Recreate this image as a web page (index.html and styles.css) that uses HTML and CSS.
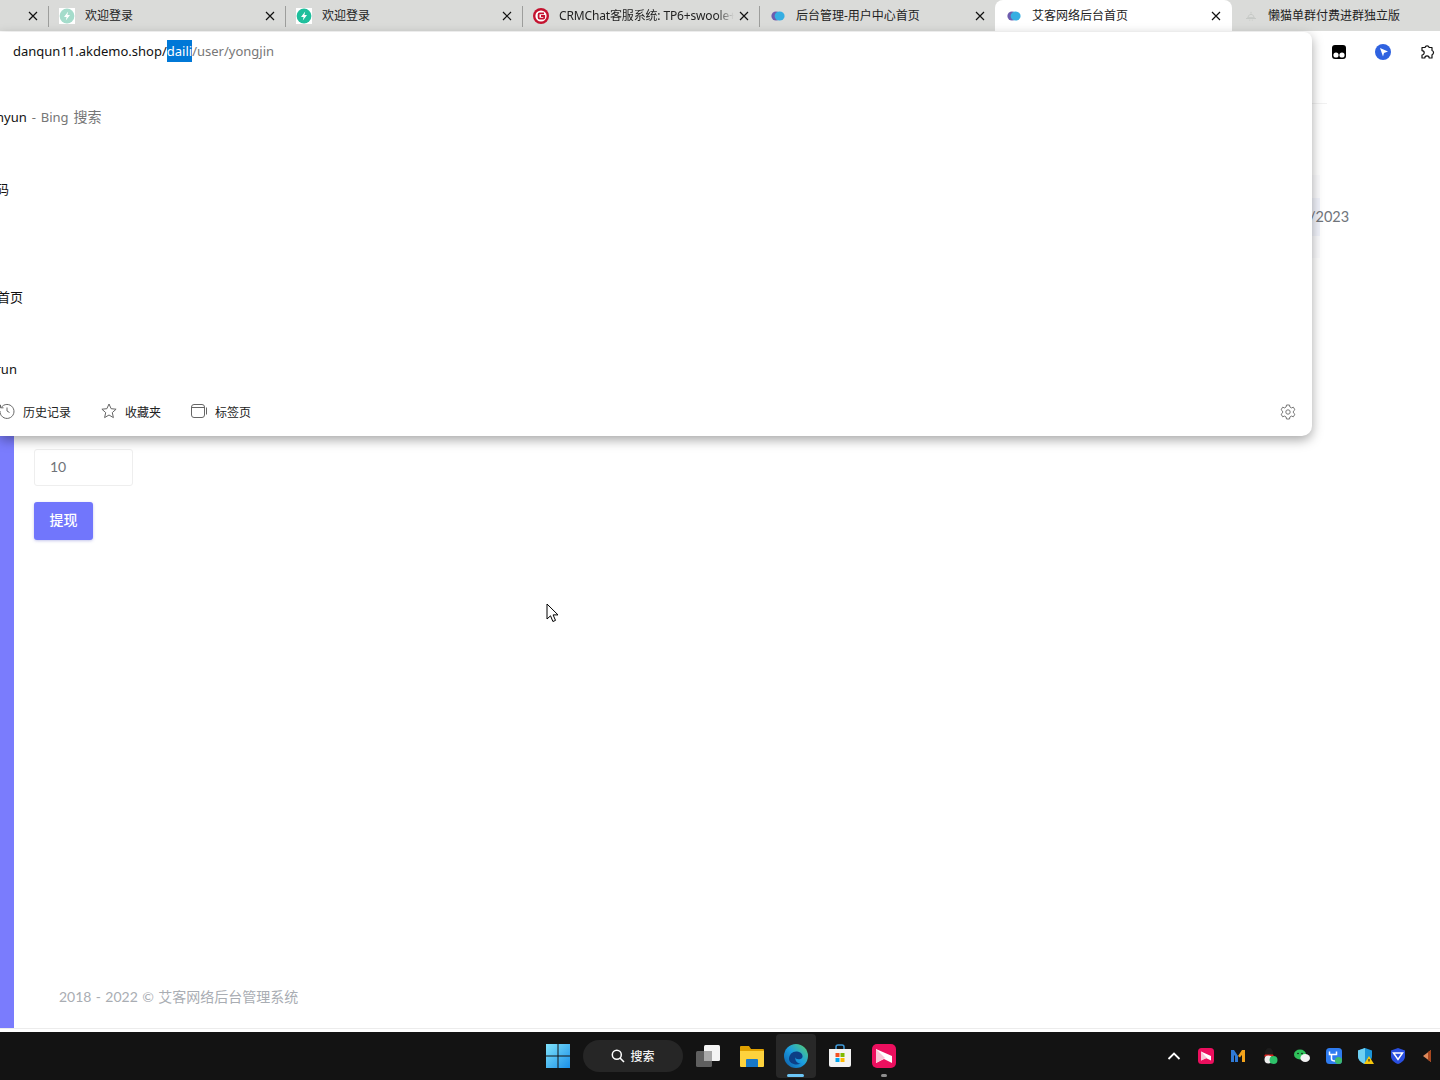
FILE: index.html
```html
<!DOCTYPE html>
<html lang="zh-CN">
<head>
<meta charset="utf-8">
<title>艾客网络后台首页</title>
<link rel="stylesheet" href="styles.css">
</head>
<body>
<div class="tabs">
  <div class="tab tab-first"><svg class="close" viewBox="0 0 10 10"><path d="M1 1l8 8M9 1l-8 8"/></svg></div>
  <div class="tab sep">
    <svg class="fav" viewBox="0 0 16 16"><rect width="16" height="16" fill="#fff"/><circle cx="8" cy="8" r="7.4" fill="#a5dccb"/><path d="M9.2 3.4L5 9h2.6l-.8 3.6L11 7H8.4z" fill="#fff"/></svg>
    <span class="tab-title">欢迎登录</span>
    <svg class="close" viewBox="0 0 10 10"><path d="M1 1l8 8M9 1l-8 8"/></svg>
  </div>
  <div class="tab sep">
    <svg class="fav" viewBox="0 0 16 16"><rect width="16" height="16" fill="#fff"/><circle cx="8" cy="8" r="7.4" fill="#1fbf9c"/><path d="M9.2 3.4L5 9h2.6l-.8 3.6L11 7H8.4z" fill="#fff"/></svg>
    <span class="tab-title">欢迎登录</span>
    <svg class="close" viewBox="0 0 10 10"><path d="M1 1l8 8M9 1l-8 8"/></svg>
  </div>
  <div class="tab sep">
    <svg class="fav" viewBox="0 0 16 16"><circle cx="8" cy="8" r="8" fill="#c4122f"/><circle cx="8" cy="8" r="5.6" fill="#fff"/><path d="M11 5.4H6.6a1 1 0 0 0-1 1v3.2a1 1 0 0 0 1 1h3.6a1 1 0 0 0 1-1V8H8" fill="none" stroke="#c4122f" stroke-width="1.8"/></svg>
    <span class="tab-title tab-fade">CRMChat客服系统: TP6+swoole+</span>
    <svg class="close" viewBox="0 0 10 10"><path d="M1 1l8 8M9 1l-8 8"/></svg>
  </div>
  <div class="tab sep tab-narrow">
    <svg class="fav blob" viewBox="0 0 14 10"><circle cx="5" cy="5" r="4.6" fill="#6d5cae"/><ellipse cx="8.6" cy="5" rx="5" ry="4.6" fill="#35aee2"/></svg>
    <span class="tab-title">后台管理-用户中心首页</span>
    <svg class="close" viewBox="0 0 10 10"><path d="M1 1l8 8M9 1l-8 8"/></svg>
  </div>
  <div class="tab tab-active">
    <svg class="fav blob" viewBox="0 0 14 10"><circle cx="5" cy="5" r="4.6" fill="#6d5cae"/><ellipse cx="8.6" cy="5" rx="5" ry="4.6" fill="#35aee2"/></svg>
    <span class="tab-title">艾客网络后台首页</span>
    <svg class="close" viewBox="0 0 10 10"><path d="M1 1l8 8M9 1l-8 8"/></svg>
  </div>
  <div class="tab tab-last">
    <svg class="fav blob" viewBox="0 0 14 12"><path d="M7 1v2M3 8c1-1 1-4 4-4s3 3 4 4zM1 9h12M5 11h1M8 11h1" fill="none" stroke="#c6c9c6" stroke-width="1.2"/></svg>
    <span class="tab-title">懒猫单群付费进群独立版</span>
  </div>
</div>

<div class="toolbar">
  <svg class="tool" viewBox="0 0 16 16"><rect x="1" y="1" width="14" height="14" rx="3" fill="#000"/><circle cx="5" cy="11" r="2.6" fill="#fff"/><circle cx="11" cy="11" r="2.6" fill="#fff"/></svg>
  <svg class="tool" viewBox="0 0 16 16"><circle cx="8" cy="8" r="8" fill="#2f62e0"/><path d="M5 4l8 3.6L9 9l-1 3.6z" fill="#fff"/></svg>
  <svg class="tool" viewBox="0 0 16 16"><path d="M3 3.500h3a2.200 2.200 0 0 1 4.200 0H13v3a2.200 2.200 0 0 1 0 4.200V14h-2.800a2.200 2.200 0 0 0-4.400 0H3v-3a2.200 2.200 0 0 0 0-4.400z" fill="#fff" stroke="#111" stroke-width="1.200" stroke-linejoin="round"/></svg>
</div>

<div class="page">
  <aside class="sidebar"></aside>
  <main class="content">
    <div class="topbar"></div>
    <div class="date-card"><div class="date-box"><span class="date-text">/2023</span></div></div>
    <div class="amount">10</div>
    <button class="withdraw">提现</button>
    <footer class="copyright">2018 - 2022 © 艾客网络后台管理系统</footer>
  </main>
</div>
<div class="page-end"></div>

<div class="taskbar">
  <div class="slot">
    <svg class="icon24" viewBox="0 0 24 24"><defs><linearGradient id="win" x1="0" y1="0" x2="1" y2="1"><stop offset="0" stop-color="#7fe3fb"/><stop offset="1" stop-color="#1a8fe8"/></linearGradient></defs><path d="M0 0h11.500v11.500H0zM12.500 0H24v11.500H12.500zM0 12.500h11.500V24H0zM12.500 12.500H24V24H12.500z" fill="url(#win)"/></svg>
  </div>
  <div class="search">
    <svg class="search-glass" viewBox="0 0 14 14"><circle cx="5.800" cy="5.800" r="4.500" fill="none" stroke="#fff" stroke-width="1.500"/><path d="M9 9l4 4" stroke="#fff" stroke-width="1.600"/></svg>
    <span>搜索</span>
  </div>
  <div class="slot">
    <svg class="icon24" viewBox="0 0 24 24"><rect x="0" y="7" width="16" height="16" rx="1.500" fill="#5f5f5f"/><rect x="8" y="1" width="16" height="16" rx="1.500" fill="#f4f4f4"/><rect x="8" y="7" width="8" height="10" fill="#a8a8a8"/></svg>
  </div>
  <div class="slot">
    <svg class="icon24" viewBox="0 0 24 24"><path d="M0 3a1 1 0 0 1 1-1h8l2 3h12a1 1 0 0 1 1 1v3H0z" fill="#e0a100"/><path d="M0 7h24v15a1 1 0 0 1-1 1H1a1 1 0 0 1-1-1z" fill="#fdd23d"/><path d="M7 15h10a1 1 0 0 1 1 1v7H6v-7a1 1 0 0 1 1-1z" fill="#1878c8"/></svg>
  </div>
  <div class="slot slot-active">
    <svg class="icon24" viewBox="0 0 24 24"><defs><linearGradient id="edge" x1="0" y1="1" x2="1" y2="0"><stop offset="0" stop-color="#0c59a4"/><stop offset=".5" stop-color="#1b9de2"/><stop offset="1" stop-color="#5ad36a"/></linearGradient></defs><circle cx="12" cy="12" r="12" fill="url(#edge)"/><path d="M5 15c0-5 4-8 8-7.500s6 3 5.500 5.500c-.3 1.500-2 2.300-4 2.300s-3-1-3-2c-1 3 1.500 6 5 6.500-5.500 2.200-11.500-.8-11.500-4.800z" fill="#0d3f86"/></svg>
    <i class="run-bar"></i>
  </div>
  <div class="slot">
    <svg class="icon24" viewBox="0 0 24 24"><path d="M8 5V3a2 2 0 0 1 2-2h4a2 2 0 0 1 2 2v2" fill="none" stroke="#3f9bd9" stroke-width="1.500"/><path d="M1 5h22v16a2 2 0 0 1-2 2H3a2 2 0 0 1-2-2z" fill="#f3f3f3"/><path d="M7.500 9h4v4h-4z" fill="#f25022"/><path d="M12.500 9h4v4h-4z" fill="#7fba00"/><path d="M7.500 14h4v4h-4z" fill="#00a4ef"/><path d="M12.500 14h4v4h-4z" fill="#ffb900"/></svg>
  </div>
  <div class="slot">
    <svg class="icon24" viewBox="0 0 24 24"><rect width="24" height="24" rx="5" fill="#ec0f5e"/><path d="M4 5l16 7v7l-8-4-8 4z" fill="#fff"/><path d="M4 5l9 9-9 5z" fill="#f7c6d6"/></svg>
    <i class="run-dot"></i>
  </div>
  <div class="tray">
    <div class="tray-slot"><svg class="icon16" viewBox="0 0 16 16"><path d="M2.500 11L8 5.500l5.500 5.500" fill="none" stroke="#fff" stroke-width="1.800"/></svg></div>
    <div class="tray-slot"><svg class="icon16" viewBox="0 0 16 16"><rect width="16" height="16" rx="3.500" fill="#ec0f5e"/><path d="M3 3.500l10 4.500v4.500L8 10l-5 2.500z" fill="#fff"/><path d="M3 3.500L9 10l-6 2.500z" fill="#f7c6d6"/></svg></div>
    <div class="tray-slot"><svg class="icon16" viewBox="0 0 16 16"><path d="M1 14V2h3l4 6v6H5V8l-1-1v7z" fill="#2f7ad6"/><path d="M8 8l4-6h3v12h-3V7l-1 1-1 1.500z" fill="#f3a31b"/></svg></div>
    <div class="tray-slot"><svg class="icon16" viewBox="0 0 16 16"><ellipse cx="7" cy="5" rx="4" ry="5" fill="#1d1d1d"/><path d="M3 6.500h8l1 2H2z" fill="#e0201c"/><ellipse cx="6.500" cy="11.500" rx="4" ry="4" fill="#eee"/><circle cx="11.500" cy="12" r="4" fill="#2ec26a"/></svg></div>
    <div class="tray-slot"><svg class="icon16" viewBox="0 0 16 16"><ellipse cx="6" cy="6.500" rx="6" ry="5" fill="#2fc25b"/><ellipse cx="11.200" cy="10" rx="4.800" ry="4" fill="#f2f2f2"/><circle cx="4" cy="5.500" r=".8" fill="#111"/><circle cx="8" cy="5.500" r=".8" fill="#111"/></svg></div>
    <div class="tray-slot"><svg class="icon16" viewBox="0 0 16 16"><rect width="16" height="16" rx="3.500" fill="#2f7cf0"/><path d="M3.500 3.500v3h2V11c0 1.500 1.500 2 4 2M10.500 3.500v3h-5" fill="none" stroke="#fff" stroke-width="1.500"/><circle cx="12.500" cy="12.500" r="3.500" fill="#3dbb6c"/></svg></div>
    <div class="tray-slot"><svg class="icon16" viewBox="0 0 16 16"><path d="M7 0l7 2.500V8c0 4-3 6.500-7 8-4-1.500-7-4-7-8V2.500z" fill="#1c95d8"/><path d="M7 0v16C3 14.500 0 12 0 8V2.500z" fill="#6fd0f2"/><path d="M11 8l5 8H6z" fill="#f7c70c"/><path d="M11 11v2.500" stroke="#222" stroke-width="1.200"/></svg></div>
    <div class="tray-slot"><svg class="icon16" viewBox="0 0 16 16"><path d="M8 0l7 2.500V8c0 4-3 6.500-7 8-4-1.500-7-4-7-8V2.500z" fill="#2a4fe0"/><path d="M3.500 5h9L8 11.500z" fill="none" stroke="#fff" stroke-width="1.500"/></svg></div>
    <div class="tray-slot"><svg class="icon16" viewBox="0 0 16 16"><path d="M1 8l8-6v12z" fill="#e08a5c"/><path d="M9 2v12L6 12V4z" fill="#a8471f"/></svg></div>
  </div>
</div>

<div class="omnibox">
  <div class="url-row"><span class="url-host">danqun11.akdemo.shop/</span><span class="url-sel">daili</span><span class="url-rest">/user/yongjin</span></div>
  <div class="suggest"><span class="cut-a">hunyun</span><span class="suggest-dim"> - Bing <span class="suggest-cjk">搜索</span></span></div>
  <div class="suggest gap-one"><span class="cut-b">源码</span></div>
  <div class="suggest gap-two"><span class="cut-c">后台首页</span></div>
  <div class="suggest gap-one"><span class="cut-d">.run</span></div>
  <div class="box-foot">
    <span class="foot-item foot-history">
      <svg class="foot-icon" viewBox="0 0 16 16"><path d="M2.200 4.500A7 7 0 1 1 1 8M1.500 1.800v3h3M8 4.500V8l2.500 1.500" fill="none" stroke="#666" stroke-width="1"/></svg>历史记录</span>
    <span class="foot-item">
      <svg class="foot-icon" viewBox="0 0 16 16"><path d="M8 1l2.100 4.700 5 .5-3.800 3.400 1.100 5L8 12l-4.400 2.600 1.100-5L.9 6.200l5-.5z" fill="none" stroke="#666" stroke-width="1"/></svg>收藏夹</span>
    <span class="foot-item">
      <svg class="foot-icon" viewBox="0 0 16 16"><rect x=".5" y="1.500" width="13" height="13" rx="2.500" fill="none" stroke="#666"/><path d="M.5 4.500h13M15.500 4.500v7" fill="none" stroke="#666"/></svg>标签页</span>
    <svg class="gear" viewBox="0 0 16 16"><path d="M6.500 1h3l.4 2 1.600.9 1.900-.7 1.500 2.600-1.500 1.300v1.800l1.500 1.300-1.500 2.600-1.900-.7-1.600.9-.4 2h-3l-.4-2-1.600-.9-1.900.7L1.100 10.200l1.500-1.300V7.100L1.100 5.800l1.500-2.600 1.900.7L6.100 3z" fill="none" stroke="#777" stroke-width="1"/><circle cx="8" cy="8" r="2.200" fill="none" stroke="#777"/></svg>
  </div>
</div>

<svg class="cursor" viewBox="0 0 13 20"><path d="M1 1v15l3.500-3.200 2.400 5.700 2.600-1.100-2.400-5.500H12z" fill="#fff" stroke="#000" stroke-width="1"/></svg>
</body>
</html>
```

FILE: styles.css
```css
* { box-sizing: border-box; }
html, body { margin: 0; height: 1080px; overflow: hidden; }
body {
  position: relative;
  display: flex;
  flex-direction: column;
  background: #fff;
  font-family: "Noto Sans", "Noto Sans CJK SC", sans-serif;
  color: #111;
}

/* tab strip */
.tabs {
  flex: none;
  height: 31px;
  display: flex;
  background: #dadbd9;
  overflow: hidden;
}
.tab {
  flex: none;
  width: 237px;
  height: 31px;
  display: flex;
  align-items: center;
  padding: 0 10px 0 11px;
  font-size: 12px;
  position: relative;
}
.tab-first { width: 48px; justify-content: flex-end; padding: 0 10px 0 0; }
.tab-narrow { width: 236px; }
.sep::before {
  content: "";
  position: absolute;
  left: 0;
  top: 6px;
  height: 21px;
  width: 1px;
  background: #9d9e9c;
}
.tab-active {
  background: #fff;
  border-radius: 8px 8px 0 0;
  padding-right: 11px;
}
.tab-last { width: 240px; color: #222; }
.fav { flex: none; width: 16px; height: 16px; margin-right: 10px; }
.blob { width: 14px; height: 10px; margin-right: 11px; margin-left: 1px; }
.tab-last .blob { margin-right: 10px; }
.tab-title {
  flex: 1;
  min-width: 0;
  white-space: nowrap;
  overflow: hidden;
  line-height: 16px;
  color: #222;
}
.tab-fade {
  margin-right: -5px;
  letter-spacing: -.15px;
  -webkit-mask-image: linear-gradient(90deg, #000 90%, transparent 100%);
  mask-image: linear-gradient(90deg, #000 90%, transparent 100%);
}
.close {
  flex: none;
  width: 10px;
  height: 10px;
  margin-left: 10px;
  fill: none;
  stroke: #111;
  stroke-width: 1.200;
}

/* toolbar behind the dropdown */
.toolbar {
  flex: none;
  height: 41px;
  display: flex;
  justify-content: flex-end;
  align-items: center;
  gap: 28px;
  padding: 0 5px 0 0;
}
.tool { width: 16px; height: 16px; }

/* the page */
.page {
  flex: 1;
  min-height: 0;
  display: flex;
}
.sidebar { flex: none; width: 14px; background: #7a7cfd; }
.content {
  flex: 1;
  min-width: 0;
  display: flex;
  flex-direction: column;
  align-items: flex-start;
  padding: 0 0 21px 20px;
}
.topbar {
  flex: none;
  align-self: stretch;
  height: 32px;
  margin-right: 113px;
  border-bottom: 1px solid #f1f1f1;
}
.date-card {
  flex: none;
  align-self: stretch;
  height: 83px;
  margin: 71px 120px 0 0;
  padding: 23px 0;
  background: #fbfbfd;
}
.date-box {
  height: 38px;
  margin-left: auto;
  width: 100px;
  background: #f1f3fb;
  display: flex;
  align-items: center;
  padding: 0 0 1px 89px;
  white-space: nowrap;
}
.date-text {
  font-family: Lato, "Noto Sans", sans-serif;
  font-size: 14.5px;
  color: #70757b;
}
.amount {
  flex: none;
  width: 99px;
  height: 37px;
  margin-top: 191px;
  padding: 0 15px;
  border: 1px solid #eeeeee;
  border-radius: 3px;
  font-family: Lato, "Noto Sans", sans-serif;
  font-size: 14px;
  line-height: 33px;
  color: #6f7379;
}
.withdraw {
  flex: none;
  width: 59px;
  height: 38px;
  margin-top: 16px;
  padding: 0 0 4px;
  border: 0;
  border-radius: 3px;
  background: #7176fc;
  color: #fff;
  font-family: "Noto Sans CJK SC", sans-serif;
  font-size: 14px;
  font-weight: 500;
  box-shadow: 0 1px 3px rgba(90, 95, 200, .35);
}
.copyright {
  margin-top: auto;
  margin-left: 25px;
  font-family: Lato, "Noto Sans CJK SC", sans-serif;
  font-size: 14px;
  line-height: 20px;
  word-spacing: .75px;
  color: #a9adb3;
}
.page-end {
  flex: none;
  height: 4px;
  border-top: 1px solid #ececec;
}

/* taskbar */
.taskbar {
  flex: none;
  height: 48px;
  display: flex;
  align-items: center;
  padding-left: 536px;
  background: #131313;
  overflow: hidden;
}
.slot {
  flex: none;
  position: relative;
  width: 44px;
  height: 44px;
  display: flex;
  align-items: center;
  justify-content: center;
  border-radius: 4px;
}
.slot-active { width: 40px; margin: 0 2px; background: #282828; }
.icon24 { width: 24px; height: 24px; }
.icon16 { width: 16px; height: 16px; }
.search {
  flex: none;
  width: 100px;
  height: 32px;
  margin: 0 3px;
  display: flex;
  align-items: center;
  justify-content: center;
  gap: 5px;
  border-radius: 16px;
  background: #262626;
  color: #f2f2f2;
  font-family: "Noto Sans CJK SC", sans-serif;
  font-size: 12px;
  font-weight: 500;
  line-height: 30px;
}
.search-glass { width: 14px; height: 14px; }
.run-bar {
  position: absolute;
  left: 11px;
  bottom: 1px;
  width: 17px;
  height: 3px;
  border-radius: 2px;
  background: #6cc6f6;
}
.run-dot {
  position: absolute;
  left: 19px;
  bottom: 1px;
  width: 6px;
  height: 3px;
  border-radius: 2px;
  background: #8e8e8e;
}
.tray {
  flex: none;
  display: flex;
  margin-left: 252px;
}
.tray-slot {
  flex: none;
  width: 32px;
  height: 32px;
  display: flex;
  align-items: center;
  justify-content: center;
}

/* address bar dropdown, over the page */
.omnibox {
  position: absolute;
  left: 0;
  top: 32px;
  width: 1312px;
  height: 404px;
  padding-right: 16px;
  background: #fff;
  border-radius: 0 8px 10px 0;
  box-shadow: 0 4px 12px rgba(0, 0, 0, .35);
  font-size: 13px;
  font-family: "Noto Sans", "Noto Sans CJK SC", sans-serif;
  color: #111;
}
.url-row {
  height: 67px;
  padding: 8px 0 0 13px;
  display: flex;
  align-items: flex-start;
  font-size: 13px;
  line-height: 22px;
  white-space: nowrap;
}
.url-host { color: #111; }
.url-sel { background: #0078d7; color: #fff; }
.url-rest { color: #777; }
.suggest {
  height: 36px;
  line-height: 36px;
  white-space: nowrap;
  overflow: hidden;
}
.gap-one { margin-top: 36px; }
.gap-two { margin-top: 72px; }
.suggest-dim { color: #767676; word-spacing: 1.5px; }
.suggest-cjk { font-size: 14px; }
.cut-a { margin-left: -20px; }
.cut-b { margin-left: -17px; }
.cut-c { margin-left: -29px; }
.cut-d { margin-left: -8px; }
.box-foot {
  margin-top: 7px;
  height: 34px;
  display: flex;
  align-items: center;
  gap: 30px;
  font-size: 12px;
  font-family: "Noto Sans CJK SC", sans-serif;
}
.foot-item { display: flex; align-items: center; gap: 8px; color: #222; }
.foot-history { margin-left: -1px; }
.foot-icon { width: 16px; height: 16px; }
.gear { width: 16px; height: 16px; margin: 2px 0 0 auto; }

.cursor {
  position: absolute;
  left: 546px;
  top: 603px;
  width: 13px;
  height: 20px;
}
```
